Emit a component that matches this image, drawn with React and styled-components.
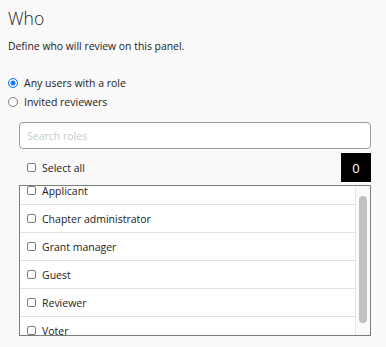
import React, { useEffect, useRef } from 'react'
import styled, { createGlobalStyle } from 'styled-components'

const GlobalStyle = createGlobalStyle`
    body {
        margin: 0;
        background: #f9f9f9;
        font-family: "Open Sans", "Noto Sans", sans-serif;
        color: #222;
    }
`

const Page = styled.div`
    padding: 6px 15px 0 8px;
    display: flex;
    flex-direction: column;
`

const Title = styled.h2`
    margin: 0;
    font-size: 17.5px;
    font-weight: 300;
    line-height: 24px;
`

const Description = styled.p`
    margin: 8px 0 0;
    font-size: 10.4px;
    line-height: 16px;
`

const RadioGroup = styled.div`
    margin-top: 19px;
    display: flex;
    flex-direction: column;
`

const RadioRow = styled.label`
    display: flex;
    align-items: center;
    height: 19px;
    font-size: 10.5px;
`

const Radio = styled.input.attrs({ type: 'radio' })`
    appearance: none;
    margin: 0 6px 0 0;
    width: 10px;
    height: 10px;
    border: 1px solid #7a7a7a;
    border-radius: 50%;
    background: #fff;
    box-sizing: border-box;
    &:checked {
        border-color: #1a7cf5;
        background: #1a7cf5;
        box-shadow: inset 0 0 0 1.5px #fff;
    }
`

const Panel = styled.div`
    margin: 11px 0 0 11px;
    display: flex;
    flex-direction: column;
`

const Search = styled.input`
    box-sizing: border-box;
    width: 100%;
    height: 27px;
    border: 1px solid #9a9a9a;
    border-radius: 4px;
    background: #fff;
    padding: 0 7px;
    font-family: inherit;
    font-size: 10.5px;
    outline: none;
    &::placeholder {
        color: #c9c9c9;
    }
`

const SelectBar = styled.div`
    margin-top: 4px;
    display: flex;
    align-items: center;
    justify-content: space-between;
`

const CheckLabel = styled.label`
    display: flex;
    align-items: center;
    font-size: 10.5px;
    padding-left: ${p => p.$indent}px;
`

const Check = styled.input.attrs({ type: 'checkbox' })`
    appearance: none;
    margin: 0 6px 0 0;
    width: 9px;
    height: 9px;
    border: 1px solid #7a7a7a;
    border-radius: 2px;
    background: #fff;
    box-sizing: border-box;
`

const Count = styled.div`
    width: 30px;
    height: 29px;
    background: #000;
    color: #fff;
    display: flex;
    align-items: center;
    justify-content: center;
    font-size: 13px;
`

const List = styled.div`
    margin-top: 3px;
    height: 151px;
    box-sizing: border-box;
    border: 1px solid #7b7b7b;
    background: #fff;
    display: flex;
`

const Viewport = styled.div`
    flex: 1;
    overflow-y: scroll;
    scrollbar-width: none;
    &::-webkit-scrollbar {
        display: none;
    }
`

const ScrollTrack = styled.div`
    width: 15px;
    box-sizing: border-box;
    background: #fafafa;
    border-left: 1px solid #e6e6e6;
    padding: 10px 3px 12px 3px;
    display: flex;
`

const ScrollThumb = styled.div`
    flex: 1;
    background: #c1c1c1;
    border-radius: 4px;
`

const Row = styled.div`
    height: 28px;
    box-sizing: border-box;
    border-bottom: 1px solid #e2e2e2;
    display: flex;
    align-items: center;
    padding-left: 7px;
    &:last-child {
        margin-bottom: 7px;
    }
`

const roles = ['Applicant', 'Chapter administrator', 'Grant manager', 'Guest', 'Reviewer', 'Voter']

export default function App() {
    const listRef = useRef(null)

    useEffect(() => {
        if (listRef.current) listRef.current.scrollTop = 9
    }, [])

    return (
        <Page>
            <GlobalStyle />
            <Title>Who</Title>
            <Description>Define who will review on this panel.</Description>
            <RadioGroup>
                <RadioRow>
                    <Radio name="who" defaultChecked />
                    Any users with a role
                </RadioRow>
                <RadioRow>
                    <Radio name="who" />
                    Invited reviewers
                </RadioRow>
            </RadioGroup>
            <Panel>
                <Search placeholder="Search roles" />
                <SelectBar>
                    <CheckLabel $indent={8}>
                        <Check />
                        Select all
                    </CheckLabel>
                    <Count>0</Count>
                </SelectBar>
                <List>
                    <Viewport ref={listRef}>
                        {roles.map(role => (
                            <Row key={role}>
                                <CheckLabel $indent={0}>
                                    <Check />
                                    {role}
                                </CheckLabel>
                            </Row>
                        ))}
                    </Viewport>
                    <ScrollTrack>
                        <ScrollThumb />
                    </ScrollTrack>
                </List>
            </Panel>
        </Page>
    )
}
